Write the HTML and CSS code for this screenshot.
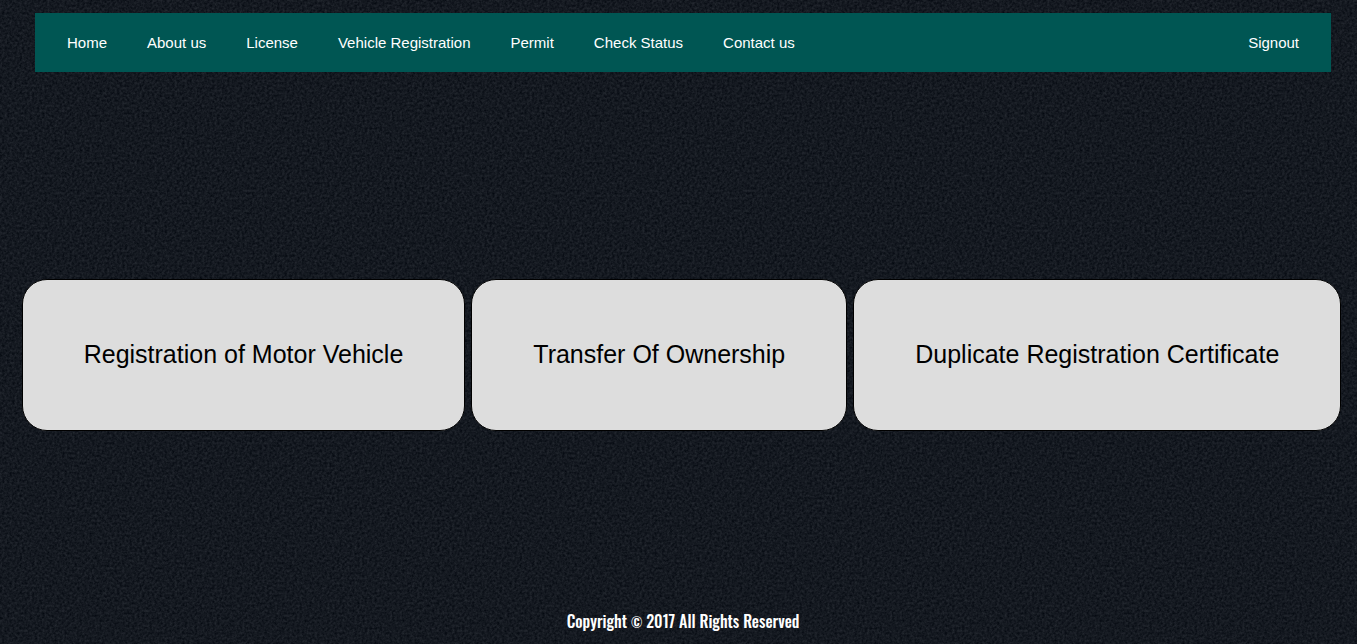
FILE: index.html
```html
<!DOCTYPE html>
<html lang="en">
<head>
<meta charset="utf-8">
<meta name="viewport" content="width=device-width, initial-scale=1">
<title>Vehicle Registration</title>
<link rel="stylesheet" href="styles.css">
</head>
<body>
<header class="site-header">
  <nav class="navbar">
    <a class="nav-link" href="#">Home</a>
    <a class="nav-link" href="#">About us</a>
    <a class="nav-link" href="#">License</a>
    <a class="nav-link" href="#">Vehicle Registration</a>
    <a class="nav-link" href="#">Permit</a>
    <a class="nav-link" href="#">Check Status</a>
    <a class="nav-link" href="#">Contact us</a>
    <a class="nav-link nav-end" href="#">Signout</a>
  </nav>
</header>
<main class="services">
  <button class="service" type="button">Registration of Motor Vehicle</button>
  <button class="service" type="button">Transfer Of Ownership</button>
  <button class="service" type="button">Duplicate Registration Certificate</button>
</main>
<footer class="site-footer">Copyright <span class="mark">©</span> 2017 All Rights Reserved</footer>
</body>
</html>
```

FILE: styles.css
```css
* {
  box-sizing: border-box;
}

body {
  margin: 0;
  min-height: 100vh;
  display: flex;
  flex-direction: column;
  font-family: "Liberation Sans", Arial, sans-serif;
  background-color: #141921;
  /* Fine grain over the dark base colour */
  background-image: url("data:image/svg+xml,%3Csvg xmlns='http://www.w3.org/2000/svg' width='500' height='500'%3E%3Cfilter id='g' x='0' y='0' width='100%25' height='100%25' color-interpolation-filters='sRGB'%3E%3CfeTurbulence type='fractalNoise' baseFrequency='.4' numOctaves='3' stitchTiles='stitch'/%3E%3CfeColorMatrix values='.16 0 0 0 0 .16 0 0 0 .018 .16 0 0 0 .047 0 0 0 0 1'/%3E%3C/filter%3E%3Crect width='500' height='500' filter='url(%23g)'/%3E%3C/svg%3E");
}

.site-header {
  padding: 13px 26px 0 35px;
}

.navbar {
  display: flex;
  flex-wrap: wrap;
  padding: 10px 12px;
  background: #005653;
}

.nav-link {
  padding: 8px 20px;
  font-size: 15px;
  line-height: 23px;
  color: #fff;
  text-decoration: none;
}

.nav-end {
  margin-left: auto;
}

.services {
  flex: 1;
  display: flex;
  flex-wrap: wrap;
  align-items: center;
  align-content: center;
  justify-content: center;
  gap: 6px;
  padding: 28px 14px 0 20px;
}

.service {
  padding: 59px 61px 61px;
  border: 1px solid #000;
  border-radius: 25px;
  background: #ddd;
  color: #000;
  font-family: inherit;
  font-size: 25px;
  line-height: 30px;
  cursor: pointer;
}

.site-footer {
  padding: 0 26px 10px 35px;
  font-family: Oswald, "Liberation Sans Narrow", "Liberation Sans", sans-serif;
  font-size: 16px;
  font-weight: 500;
  line-height: 24px;
  text-align: center;
  color: #fff;
}

.mark {
  font-size: 13px;
}
```
